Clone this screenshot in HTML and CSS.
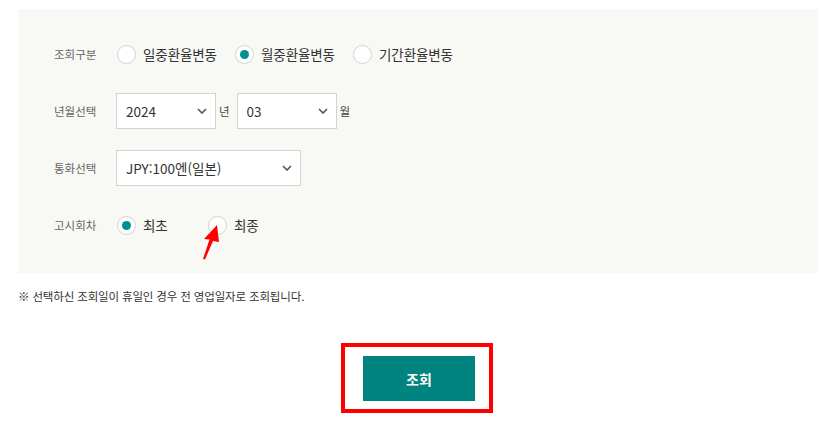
FILE: index.html
```html
<!DOCTYPE html>
<html lang="ko">
<head>
<meta charset="utf-8">
<link rel="stylesheet" href="styles.css">
</head>
<body>
<div class="page">
  <div class="search-box">
    <div class="row">
      <div class="label">조회구분</div>
      <div class="options">
        <label class="opt"><span class="radio"></span><span class="opt-text">일중환율변동</span></label>
        <label class="opt"><span class="radio checked"></span><span class="opt-text">월중환율변동</span></label>
        <label class="opt"><span class="radio"></span><span class="opt-text">기간환율변동</span></label>
      </div>
    </div>
    <div class="row">
      <div class="label">년월선택</div>
      <div class="field">
        <div class="select select-sm"><span>2024</span><svg class="chev" viewBox="0 0 10 6" width="10" height="6"><path d="M1 1l4 4 4-4" fill="none" stroke="#555" stroke-width="1.6"/></svg></div>
        <span class="unit">년</span>
        <div class="select select-sm"><span>03</span><svg class="chev" viewBox="0 0 10 6" width="10" height="6"><path d="M1 1l4 4 4-4" fill="none" stroke="#555" stroke-width="1.6"/></svg></div>
        <span class="unit">월</span>
      </div>
    </div>
    <div class="row">
      <div class="label">통화선택</div>
      <div class="field">
        <div class="select select-lg"><span>JPY:100엔(일본)</span><svg class="chev" viewBox="0 0 10 6" width="10" height="6"><path d="M1 1l4 4 4-4" fill="none" stroke="#555" stroke-width="1.6"/></svg></div>
      </div>
    </div>
    <div class="row">
      <div class="label">고시회차</div>
      <div class="options">
        <label class="opt opt-short"><span class="radio checked"></span><span class="opt-text">최초</span></label>
        <label class="opt opt-short"><span class="radio"></span><span class="opt-text">최종</span></label>
      </div>
    </div>
    <svg class="arrow" viewBox="0 0 24 40" width="24" height="40">
      <polygon points="15,2 2,16 7.5,16.5 1,36 3,36.5 11,18 17,19" fill="#f00"/>
    </svg>
  </div>
  <p class="note">※ 선택하신 조회일이 휴일인 경우 전 영업일자로 조회됩니다.</p>
  <div class="btn-area">
    <div class="highlight">
      <button class="btn-search" type="button">조회</button>
    </div>
  </div>
</div>
</body>
</html>
```
FILE: styles.css
```css
* { box-sizing: border-box; }
html, body { margin: 0; padding: 0; background: #fff; }
body {
  font-family: "Noto Sans CJK KR", "Noto Sans", sans-serif;
  color: #333;
}
.page {
  width: 835px;
  padding: 9px 17px 0 18px;
}
.search-box {
  position: relative;
  background: #f8f8f5;
  padding: 27px 0 30px 36px;
  display: flex;
  flex-direction: column;
  gap: 21px;
}
.row {
  display: flex;
  align-items: center;
  height: 36px;
}
.label {
  width: 62px;
  font-size: 11.5px;
  color: #666;
}
.options {
  display: flex;
  align-items: center;
}
.opt {
  display: flex;
  align-items: center;
  width: 118px;
}
.opt-short { width: 91px; }
.radio {
  width: 19px;
  height: 19px;
  border: 1px solid #d3d3d3;
  border-radius: 50%;
  background: #fff;
  margin-left: 1px;
  margin-right: 7px;
  display: flex;
  align-items: center;
  justify-content: center;
}
.radio.checked::after {
  content: "";
  width: 9px;
  height: 9px;
  border-radius: 50%;
  background: #00918e;
}
.opt-text {
  font-size: 13.5px;
  color: #333;
  letter-spacing: -0.1px;
}
.field {
  display: flex;
  align-items: center;
}
.select {
  height: 36px;
  border: 1px solid #d3d3d3;
  background: #fff;
  display: flex;
  align-items: center;
  justify-content: space-between;
  padding: 0 8px 0 9px;
  font-size: 13.5px;
  color: #333;
}
.select-sm { width: 100px; }
.select-lg { width: 185px; }
.chev { display: block; }
.unit {
  font-size: 11.5px;
  color: #444;
  margin: 0 7px 0 3px;
}
.arrow {
  position: absolute;
  left: 184px;
  top: 214px;
}
.note {
  margin: 15px 0 0;
  font-size: 11.5px;
  line-height: 16px;
  color: #333;
  letter-spacing: -0.15px;
}
.btn-area {
  display: flex;
  justify-content: center;
  margin-top: 39px;
  padding-right: 2px;
}
.highlight {
  border: 4px solid #f00;
  padding: 9px 14px 8px 18px;
}
.btn-search {
  display: block;
  width: 112px;
  height: 45px;
  border: 0;
  background: #00847f;
  color: #fff;
  font-family: "Noto Sans CJK KR", sans-serif;
  font-size: 14px;
  font-weight: 700;
}
```
